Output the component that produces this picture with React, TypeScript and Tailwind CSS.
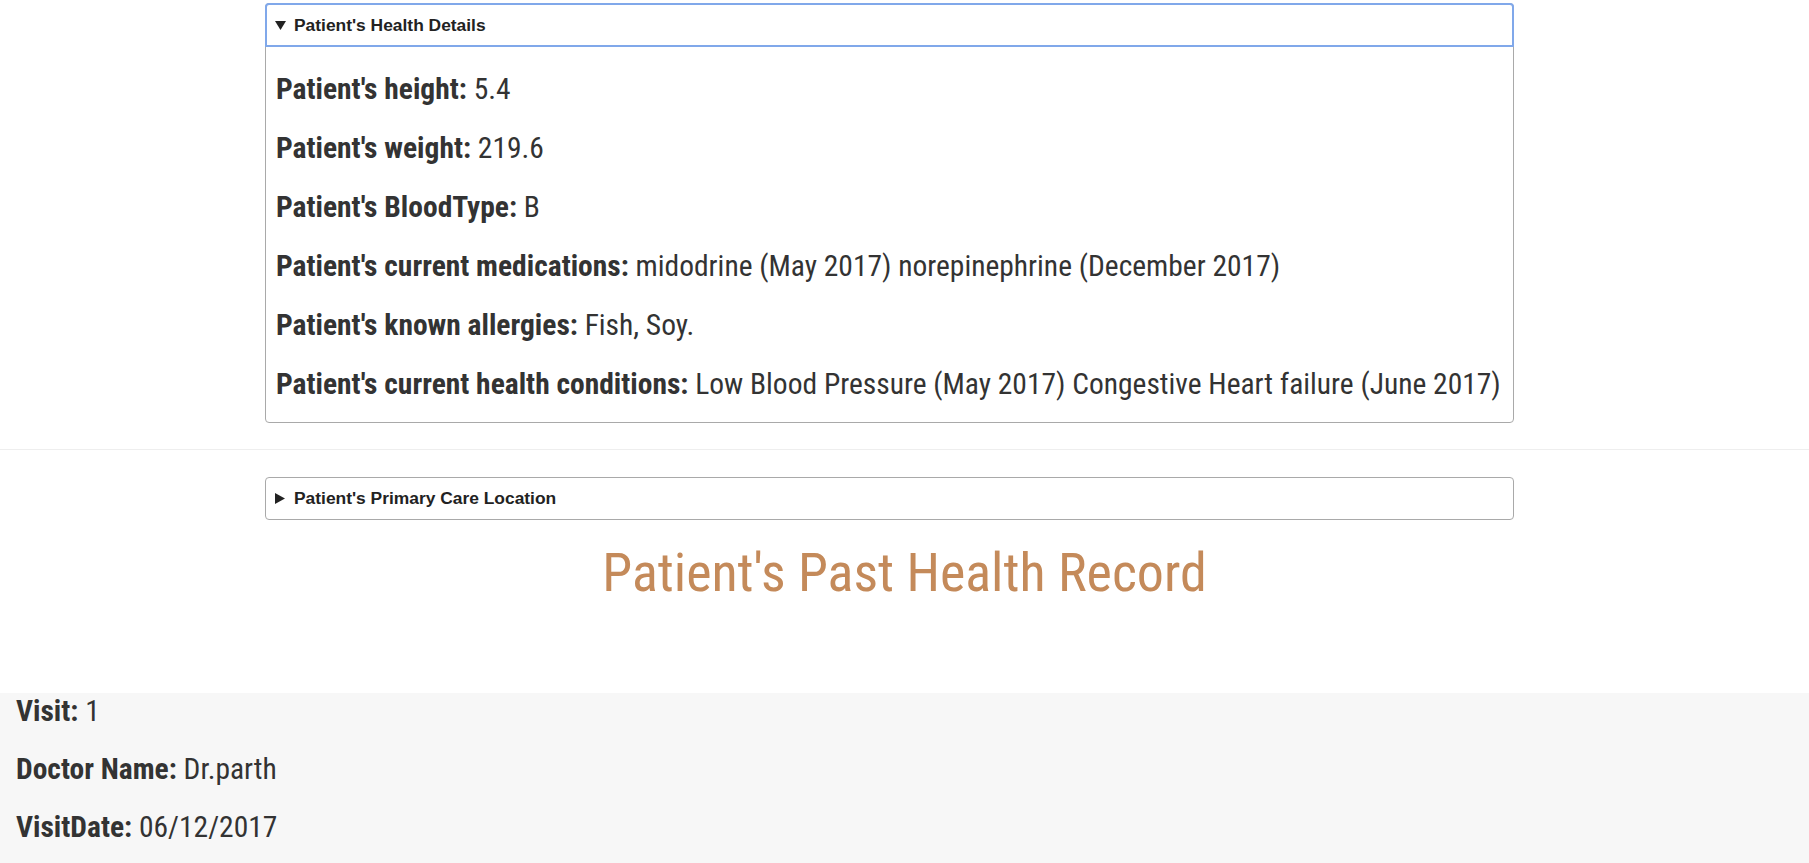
import React from "react";

const condensed = "font-['Roboto_Condensed','DejaVu_Sans_Condensed',sans-serif]";

const healthRows = [
  { label: "Patient's height:", value: "5.4" },
  { label: "Patient's weight:", value: "219.6" },
  { label: "Patient's BloodType:", value: "B" },
  { label: "Patient's current medications:", value: "midodrine (May 2017) norepinephrine (December 2017)" },
  { label: "Patient's known allergies:", value: "Fish, Soy." },
  {
    label: "Patient's current health conditions:",
    value: "Low Blood Pressure (May 2017) Congestive Heart failure (June 2017)",
  },
];

const visitRows = [
  { label: "Visit:", value: "1" },
  { label: "Doctor Name:", value: "Dr.parth" },
  { label: "VisitDate:", value: "06/12/2017" },
];

function Triangle({ open }: { open: boolean }) {
  return open ? (
    <svg width="11" height="9" viewBox="0 0 11 9" className="shrink-0">
      <path d="M0 0 L11 0 L5.5 9 Z" fill="#222" />
    </svg>
  ) : (
    <svg width="10" height="11" viewBox="0 0 10 11" className="shrink-0">
      <path d="M0 0 L10 5.5 L0 11 Z" fill="#222" />
    </svg>
  );
}

function Row({ label, value }: { label: string; value: string }) {
  return (
    <p className={`${condensed} text-[29.5px] leading-[36px] whitespace-nowrap`}>
      <b className="font-bold">{label}</b> {value}
    </p>
  );
}

export default function App() {
  return (
    <div className="min-h-screen bg-white text-[#333]">
      {/* Health details (open) */}
      <div className="pt-[3px] ml-[265px] w-[1249px]">
        <div className="border border-[#a9a9a9] rounded-[4px]">
          <div className="h-[42px] flex items-center gap-[8px] pl-[9px] rounded-t-[3px] outline-2 outline-solid outline-[#80a8ea] -outline-offset-1">
            <Triangle open />
            <span className="font-['Liberation_Sans',Arial,sans-serif] font-bold text-[17.4px] text-[#222]">
              Patient's Health Details
            </span>
          </div>
          <div className="flex flex-col gap-[23px] pt-[25px] pb-[20px] pl-[10px]">
            {healthRows.map((r) => (
              <Row key={r.label} label={r.label} value={r.value} />
            ))}
          </div>
        </div>
      </div>

      <hr className="mt-[26px] border-0 border-t border-[#eee]" />

      {/* Primary care location (closed) */}
      <div className="mt-[27px] ml-[265px] w-[1249px]">
        <div className="h-[43px] border border-[#a9a9a9] rounded-[4px] flex items-center gap-[9px] pl-[9px]">
          <Triangle open={false} />
          <span className="font-['Liberation_Sans',Arial,sans-serif] font-bold text-[17.4px] text-[#222]">
            Patient's Primary Care Location
          </span>
        </div>
      </div>

      <h1 className={`${condensed} mt-[24px] text-center text-[54px] leading-[57px] text-[#c48a5a] font-normal`}>
        Patient's Past Health Record
      </h1>

      {/* Past visits */}
      <div className="mt-[92px] bg-[#f7f7f7] pl-[16px] pb-[30px] flex flex-col gap-[22px]">
        {visitRows.map((r) => (
          <Row key={r.label} label={r.label} value={r.value} />
        ))}
      </div>
    </div>
  );
}
